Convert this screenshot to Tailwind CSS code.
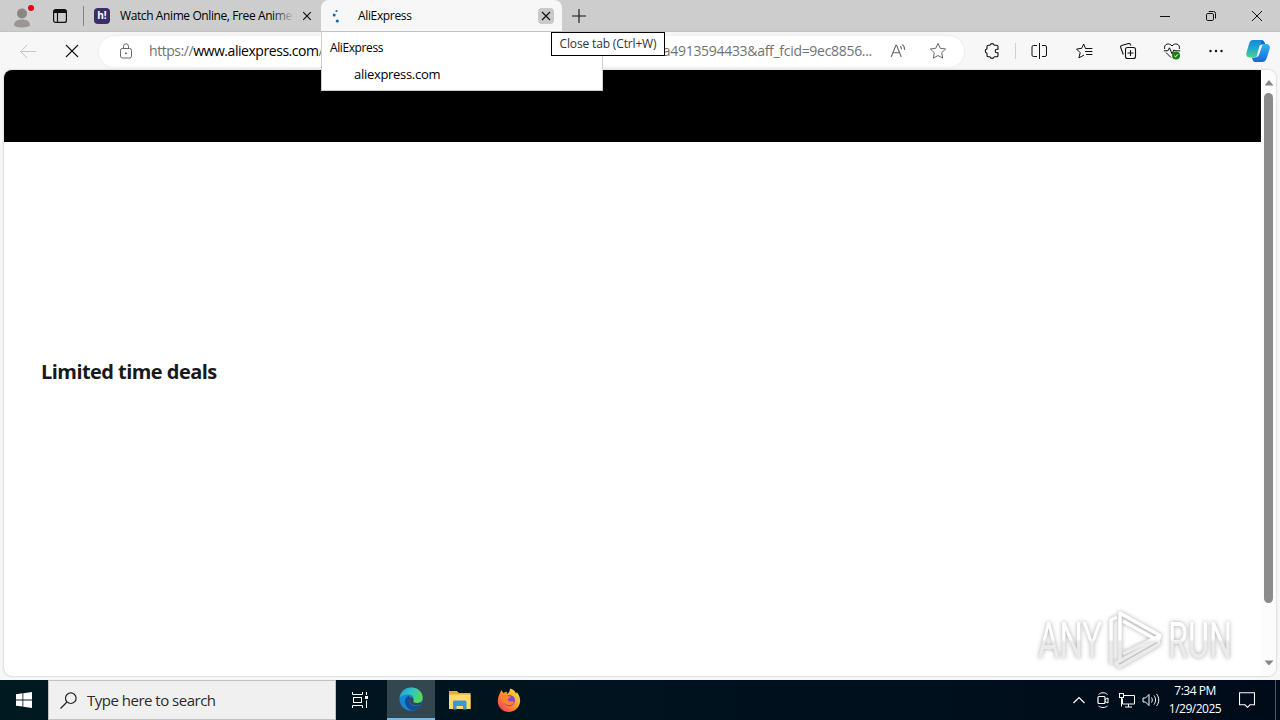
<!DOCTYPE html>
<html lang="en">
  <head>
    <meta charset="UTF-8" />
    <meta name="viewport" content="width=device-width, initial-scale=1.0" />
    <title>AliExpress</title>
    <!-- Tailwind CSS -->
    <script src="https://cdn.jsdelivr.net/npm/@tailwindcss/browser@4"></script>
  </head>
  <body class="relative flex h-[720px] w-[1280px] flex-col overflow-hidden bg-[#f7f7f7] font-['Open_Sans','Noto_Sans',sans-serif] text-black">
    <!-- Tab strip -->
    <header class="flex h-8 shrink-0 items-center border-b border-[#c2c2c2] bg-[#cdcdcd] text-xs">
      <div class="flex w-11 justify-center">
        <svg class="h-7 w-7" viewBox="0 0 28 28">
          <circle cx="14" cy="11.5" r="5" fill="#8b8583" />
          <path d="M6 23.500c0-4 3-6 8-6s8 2 8 6c-2 2.500-14 2.500-16 0z" fill="#9b9694" />
          <circle cx="23" cy="6" r="3" fill="#e30613" />
        </svg>
      </div>
      <div class="flex w-8 justify-center">
        <svg class="h-4 w-4" viewBox="0 0 16 16" fill="none" stroke="#111" stroke-width="1.2">
          <rect x="1.6" y="1.6" width="12.8" height="12.8" rx="2" />
          <path d="M2 3.5h12" stroke-width="3" />
          <path d="M5.5 4v10" />
        </svg>
      </div>
      <div class="ml-[7px] h-5 w-px bg-[#858585]"></div>
      <div class="ml-2.5 flex h-4 w-4 shrink-0 items-center justify-center rounded bg-[#3c2d66] text-[10px] font-bold text-white">h!</div>
      <div class="relative ml-2.5 w-[175px] overflow-hidden whitespace-nowrap tracking-[-0.4px]">
        Watch Anime Online, Free Anime
        <div class="absolute inset-y-0 right-0 w-6 bg-linear-to-r from-transparent to-[#cdcdcd]"></div>
      </div>
      <svg class="ml-[7px] h-2.5 w-2.5 shrink-0" viewBox="0 0 10 10" stroke="#111" stroke-width="1.2"><path d="M1.2 1.2l7.6 7.6M8.8 1.2L1.2 8.8" /></svg>
      <div class="ml-[9px] flex h-full w-[241px] shrink-0 items-center rounded-t-lg bg-[#f7f7f7]">
        <svg class="ml-2 h-4 w-4" viewBox="0 0 16 16" fill="#1666ac">
          <circle cx="7.5" cy="3" r="1.1" />
          <circle cx="5.2" cy="7" r="1.5" />
          <circle cx="8.3" cy="13" r="1.6" />
        </svg>
        <span class="ml-[13px] flex-1 tracking-[-0.35px]">AliExpress</span>
        <div class="mr-2 flex h-4 w-4 items-center justify-center rounded bg-[#c9c9c9]">
          <svg class="h-2.5 w-2.5" viewBox="0 0 10 10" stroke="#111" stroke-width="1.2"><path d="M1 1l8 8M9 1L1 9" /></svg>
        </div>
      </div>
      <svg class="ml-2.5 h-3.5 w-3.5" viewBox="0 0 14 14" stroke="#111" stroke-width="1.1"><path d="M7 0v14M0 7h14" /></svg>
      <div class="ml-auto flex">
        <div class="flex w-[46px] justify-center">
          <svg class="h-3 w-3" viewBox="0 0 12 12" stroke="#111"><path d="M1 6.5h10" /></svg>
        </div>
        <div class="flex w-[46px] justify-center">
          <svg class="h-3 w-3" viewBox="0 0 12 12" fill="none" stroke="#111">
            <rect x="1.5" y="3.5" width="7" height="7" rx="1.3" />
            <path d="M3.7 1.5h4.8a2 2 0 0 1 2 2v5" />
          </svg>
        </div>
        <div class="flex w-[46px] justify-center">
          <svg class="h-3 w-3" viewBox="0 0 12 12" stroke="#111"><path d="M1 1l10 10M11 1L1 11" /></svg>
        </div>
      </div>
    </header>

    <!-- Toolbar -->
    <div class="flex h-[38px] shrink-0 items-center">
      <div class="flex w-14 justify-center">
        <svg class="h-4 w-4" viewBox="0 0 16 16" fill="none" stroke="#c6c6c6"><path d="M16 8.5H.8M7 2L.7 8.5 7 15" /></svg>
      </div>
      <div class="flex w-8 justify-center">
        <svg class="h-3.5 w-3.5" viewBox="0 0 14 14" stroke="#111" stroke-width="1.1"><path d="M1 1l12 12M13 1L1 13" /></svg>
      </div>
      <div class="ml-[11px] flex h-[31px] w-[865px] items-center rounded-full bg-white shadow-[0_0_3px_#e4e4e4]">
        <svg class="ml-[19px] h-4 w-4 shrink-0" viewBox="0 0 16 16" fill="none" stroke="#666">
          <rect x="2.5" y="5.5" width="11" height="9.5" rx="1.8" />
          <path d="M5.5 5.5V3.3a2.5 2.5 0 0 1 5 0v2.2" />
          <circle cx="8" cy="10.3" r=".6" fill="#666" />
        </svg>
        <div class="ml-[15px] flex w-[723px] justify-between whitespace-nowrap text-sm text-[#727272]">
          <span class="tracking-[-0.45px]">https://<span class="text-black">www.aliexpress.com</span>/c</span>
          <span class="tracking-[-0.3px]">a4913594433&amp;aff_fcid=9ec8856...</span>
        </div>
        <svg class="ml-[18px] h-4 w-4" viewBox="0 0 16 16" fill="none" stroke="#666" stroke-width="1.1">
          <path d="M1.2 14L5.9 2.300h.7L11.300 14M2.900 9.800h6.700M10.300 3.200c1 1 1.300 2 1.200 3.200M12.400 1.300c1.800 1.700 2.300 3.500 2.200 5.600" />
        </svg>
        <svg class="ml-[23px] h-[18px] w-[18px]" viewBox="0 0 18 18" fill="none" stroke="#666" stroke-linejoin="round">
          <path d="M9 1.4l2.3 4.9 5.3.7-3.9 3.7 1 5.4L9 13.5l-4.7 2.6 1-5.4L1.4 7l5.3-.7z" />
        </svg>
      </div>
      <div class="ml-[5px] flex flex-1 items-center">
        <div class="flex w-11 justify-center pl-px">
          <svg class="h-[18px] w-[18px]" viewBox="0 0 18 18" fill="none" stroke="#111" stroke-width="1.1" stroke-linejoin="round">
            <path d="M5.300 3.200H7a2.200 2.200 0 0 1 4.200 0h2.500a1.300 1.300 0 0 1 1.300 1.300v2.700h-1a1.800 1.800 0 0 0 0 3.600h1v2.700a1.300 1.300 0 0 1-1.300 1.300h-2.500a2.200 2.200 0 0 1-4.200 0H5.300A1.300 1.300 0 0 1 4 13.500V11.200a2.200 2.200 0 0 1 0-4.300V4.500a1.300 1.300 0 0 1 1.300-1.300z" />
          </svg>
        </div>
        <div class="ml-0.5 h-4 w-px bg-[#d0d0d0]"></div>
        <div class="flex w-[46px] justify-center">
          <svg class="h-4 w-4" viewBox="0 0 16 16" fill="none" stroke="#111">
            <path d="M8.500 0v16M6 2.500H2.500a1.500 1.500 0 0 0-1.500 1.500v8a1.500 1.500 0 0 0 1.500 1.500H6M11 2.500h3a1.500 1.500 0 0 1 1.500 1.500v8a1.500 1.500 0 0 1-1.500 1.500H11" />
          </svg>
        </div>
        <div class="flex w-[43px] justify-center">
          <svg class="h-[18px] w-[18px]" viewBox="0 0 18 18" fill="none" stroke="#111" stroke-linejoin="round" stroke-linecap="round">
            <path d="M10.500 6.500L8.700 2 6.700 6.400 1.500 7l3.700 3.700-1.300 5.200 4.700-2.600M11 6.500h6M10.500 9.500h6.500M11.500 12.500h5.500" />
          </svg>
        </div>
        <div class="flex w-[45px] justify-center">
          <svg class="h-[18px] w-[18px]" viewBox="0 0 18 18" fill="none" stroke="#111" stroke-width="1.100">
            <rect x="6.500" y="5.500" width="10" height="11" rx="2" />
            <path d="M11.500 8v6M8.500 11h6M4.300 12.500L1.700 5.500a1.500 1.500 0 0 1 .9-2l7-2a1.500 1.500 0 0 1 1.900 1.200l.3 1" />
          </svg>
        </div>
        <div class="flex w-[43px] justify-center">
          <svg class="h-[18px] w-[18px]" viewBox="0 0 18 18" fill="none" stroke="#111" stroke-linejoin="round">
            <path d="M1.700 7C.5 1.500 6.500.5 9 4c2.500-3.500 8.500-2.500 7.300 3M3 10.500L8 15.500M.8 8.800h4l1.700-3 2.500 6 2-4 .8 1h5.500" />
            <circle cx="13" cy="13.500" r="4" fill="#188018" stroke="none" />
            <path d="M11.300 13.800l1.200 1.100 2.400-2.600" stroke="#fff" />
          </svg>
        </div>
        <div class="flex w-[45px] justify-center">
          <svg class="h-4 w-4" viewBox="0 0 16 16" fill="#111">
            <circle cx="2.500" cy="8" r="1.200" />
            <circle cx="8" cy="8" r="1.200" />
            <circle cx="13.500" cy="8" r="1.200" />
          </svg>
        </div>
        <svg class="ml-2 h-6 w-6" viewBox="0 0 24 24">
          <defs>
            <linearGradient id="copilotLeft" x1="0" y1="0" x2="0" y2="1">
              <stop offset="0" stop-color="#1686dc" />
              <stop offset="0.500" stop-color="#22a9cf" />
              <stop offset="1" stop-color="#4fd18b" />
            </linearGradient>
            <linearGradient id="copilotRight" x1="0" y1="0" x2="0" y2="1">
              <stop offset="0" stop-color="#36c5f0" />
              <stop offset="1" stop-color="#1568dd" />
            </linearGradient>
          </defs>
          <path d="M14.500 5l1.500-3.500c1.500.2 2.300 1.500 2.800 3.500h1.700c2.500 0 3.800 2 3.200 4.500l-2.600 8.500c-.9 3-2.100 5-5 5H9.500c-2 0-3-1.500-3.500-4.500h3.500z" fill="url(#copilotRight)" />
          <path d="M7 1h8.500c2 0 3 2 3.500 4h-2.500c-1.500 0-2.300 1-2.800 2.500L11 15.500c-.7 2-1.500 3-3.500 3H3.500C1 18.500-.2 16 .5 13.500L3 5c.7-2.500 2-4 4-4z" fill="url(#copilotLeft)" />
          <path d="M13.500 7c.5-1 1.300-1.500 3-1.500l-3.400 10c-.6 1.600-1.500 2.500-3.100 2.800.6-.8.900-1.700 1.200-2.800z" fill="#f7f7f7" />
          <path d="M16 1.300c1.500.8 2.500 2.200 3 3.700h-2.500c-1.500 0-2.300 1-2.800 2.500z" fill="#1264c5" />
        </svg>
      </div>
    </div>

    <!-- Web page -->
    <main class="relative mx-1 flex h-[606px] shrink-0 overflow-hidden rounded-lg bg-white shadow-[0_0_2px_#aaa]">
      <div class="w-[1257px]">
        <div class="h-[72px] bg-black"></div>
        <h2 class="mt-[215px] ml-[37px] text-xl leading-[30px] font-bold tracking-[-0.55px] text-[#191919]">Limited time deals</h2>
      </div>
      <div class="flex w-[15px] flex-col items-center bg-[#fcfcfc]">
        <svg class="mt-2.5 h-1.5 w-2.5" viewBox="0 0 10 6" fill="#858585"><path d="M5 0l4.500 5.500h-9z" /></svg>
        <div class="mt-[7px] h-[510px] w-[9px] rounded-full bg-[#8b8b8b]"></div>
        <svg class="mt-auto mb-2.5 h-1.5 w-2.5" viewBox="0 0 10 6" fill="#858585"><path d="M5 5.500L.5.500h9z" /></svg>
      </div>
      <!-- Watermark -->
      <svg class="absolute top-[534px] left-[1030px] h-[70px] w-[210px] drop-shadow-[0_0_2px_#aaa]" viewBox="0 0 210 70">
        <defs>
          <linearGradient id="markFill" gradientUnits="userSpaceOnUse" x1="0" y1="5" x2="0" y2="65">
            <stop offset=".5" stop-color="#fff" />
            <stop offset=".55" stop-color="#ebebeb" />
          </linearGradient>
        </defs>
        <g fill="url(#markFill)" font-family="Roboto" font-size="50">
          <text x="4" y="54" textLength="64" lengthAdjust="spacingAndGlyphs">ANY</text>
          <text x="134" y="54" textLength="64" lengthAdjust="spacingAndGlyphs">RUN</text>
        </g>
        <g fill="none" stroke="url(#markFill)" stroke-width="3.500" stroke-linejoin="round">
          <path d="M77 60V16l6-3" />
          <path d="M86 56V9l40 22.500-2 5L89 17" />
          <path d="M89 50l34-17 2 7-40 23-3-4 41-23" />
        </g>
      </svg>
    </main>

    <!-- Taskbar -->
    <footer class="mt-auto flex h-10 shrink-0 items-stretch bg-linear-to-r from-[#001820] via-[#00131e] to-[#000b1a] text-white">
      <div class="flex w-12 items-center justify-center">
        <svg class="h-4 w-4" viewBox="0 0 16 16" fill="#fff"><path d="M0 2.200l6.500-.9v6.200H0zM7.300 1.200L16 0v7.500H7.300zM0 8.400h6.500v6.200L0 13.700zM7.300 8.400H16V16l-8.700-1.200z" /></svg>
      </div>
      <div class="flex w-72 items-center border border-[#c2c2c2] bg-[#f0f0f0] text-[#2b2b2b]">
        <svg class="ml-[11px] h-[17px] w-[17px]" viewBox="0 0 17 17" fill="none" stroke="#222" stroke-width="1.200">
          <circle cx="10.800" cy="6.200" r="5.300" />
          <path d="M7 10L.5 16.500" />
        </svg>
        <span class="ml-2.5 text-[15px] tracking-[-0.5px]">Type here to search</span>
      </div>
      <div class="flex w-[51px] items-center pl-4">
        <svg class="h-4 w-4" viewBox="0 0 16 16" fill="none" stroke="#fff">
          <path d="M.5 0v2.500h10V0M.5 16v-2.500h10V16M14.500 0v3M14.500 8.500V16" />
          <rect x="1.500" y="5.500" width="8" height="5" />
          <path d="M13 5.500h3" stroke-width="3" />
        </svg>
      </div>
      <div class="flex w-12 items-center justify-center border-b-2 border-[#76b9ed] bg-[#334750]">
        <svg class="h-6 w-6" viewBox="0 0 24 24">
          <defs>
            <linearGradient id="edgeTop" x1="0" y1="0" x2="1" y2=".5">
              <stop offset="0" stop-color="#1897dc" />
              <stop offset=".5" stop-color="#2fc5c3" />
              <stop offset="1" stop-color="#57d957" />
            </linearGradient>
          </defs>
          <circle cx="12" cy="12" r="11.500" fill="#1688d3" />
          <path d="M.6 11C2 3.500 7 .5 12.500.5 19 .5 24 5.500 23.700 11c-.3 3.500-3 5-6 5-2.700 0-4-.8-3.500-2 1.500-2.500 0-6-3.700-6.500C6 7 2 8.500.6 11z" fill="url(#edgeTop)" />
          <path d="M10 8.500c-3.500 2-5 5-3.500 9 1.300 3.300 4 5.500 7 5.900 3.500-.3 6.700-2.400 8.500-5.400-5 2.500-11.500.5-12-4.500-.1-2 .8-3 .8-3z" fill="#134c9a" />
          <path d="M10.500 10.500c-2 5 3 8.500 8 8 2-.3 3.200-.7 4.200-1.200l1.300-2-5 .8c-3 .2-5.400-.7-4.600-2.500.5-1.500-1.400-3.800-3.900-3.100z" fill="#334750" />
        </svg>
      </div>
      <div class="flex w-[49px] items-center justify-center">
        <svg class="h-5 w-[22px]" viewBox="0 0 22 20">
          <path d="M0 1h8l2 2h11.500v16H0z" fill="#e9ad35" />
          <path d="M0 4.500h21.500V19H0z" fill="#ffd96b" />
          <path d="M4 12a1.500 1.500 0 0 1 1.500-1.500h10.500a1.500 1.500 0 0 1 1.500 1.500v7.500h-3.500V16H7.500v3.500H4z" fill="#3997d7" />
        </svg>
      </div>
      <div class="flex w-[49px] items-center justify-center">
        <svg class="h-6 w-6" viewBox="0 0 24 24">
          <defs>
            <linearGradient id="foxBody" x1="1" y1="0" x2="0" y2="1">
              <stop offset="0" stop-color="#fff14f" />
              <stop offset=".45" stop-color="#ff9d22" />
              <stop offset="1" stop-color="#f42d68" />
            </linearGradient>
          </defs>
          <path d="M3 5l1.500-3 1.700 3 3.500-1.500L10 6c2-1 3-3 3-5.500 3 .7 5 2.500 6 5l.8-1.200c2.700 3 4 7.200 3 11C21.500 20.500 17 24 12 24 5.500 24 .5 19 .8 13 .9 9.500 2 7 3 5z" fill="url(#foxBody)" />
          <circle cx="12.500" cy="12.500" r="5.500" fill="#8448d2" />
          <path d="M3.500 9c2-2.500 5-2.500 7.500-1l3 .6c-.5 1.300-2 1.800-3 2-.3 2 .8 3.300 3 2.900 2-.5 3.700.4 2.500 1.900C13 19 6 17 3.500 9z" fill="#ff8427" />
        </svg>
      </div>
      <!-- System tray -->
      <div class="ml-auto flex items-center">
        <svg class="h-2 w-3" viewBox="0 0 12 8" fill="none" stroke="#fff" stroke-width="1.200"><path d="M.5 7L6 1.500 11.500 7" /></svg>
        <svg class="ml-3 h-4 w-3" viewBox="0 0 12 16" fill="none" stroke="#fff">
          <rect x="1" y="4.500" width="7" height="7" rx="1" stroke-width="1.200" />
          <path d="M8 7.500l3-1.500v5L8 9.500M1.500 2.500c2.500-2.300 6.500-2.300 9 0M1.500 14c2.500 2 6.500 2 9 0" />
        </svg>
        <svg class="ml-[9px] h-4 w-[18px]" viewBox="0 0 18 16" fill="none" stroke="#fff">
          <path d="M6 3.500h10.500v8.500H4.500V6.500M7 15h7M10.500 12v3" />
          <rect x="1.500" y="1.500" width="4" height="4" />
          <path d="M3.500 5.500v9" />
        </svg>
        <svg class="ml-1.5 h-4 w-[18px]" viewBox="0 0 18 16" fill="none" stroke="#fff">
          <path d="M1 6h2.500L7 2.500v11L3.500 10H1zM9.500 5.500c1 1.500 1 3.500 0 5M12 3.500c2 2.700 2 6.300 0 9M14.500 2c3 3.500 3 8.500 0 12" />
        </svg>
        <div class="ml-1.5 flex w-[58px] flex-col items-center text-xs leading-[18px] tracking-[-0.5px] whitespace-nowrap">
          <span>7:34 PM</span>
          <span>1/29/2025</span>
        </div>
        <svg class="ml-[15px] h-4 w-4" viewBox="0 0 16 16" fill="none" stroke="#fff" stroke-width="1.100"><path d="M.5.800h15v12H11l-2.500 2.500L6 12.800H.5z" /></svg>
        <div class="ml-5 h-10 w-px bg-[#4c5661]"></div>
        <div class="w-1"></div>
      </div>
    </footer>

    <!-- Tab hover card -->
    <div class="absolute top-8 left-[321px] h-[59px] w-[282px] border border-t-0 border-[#d0d0d0] bg-white px-2">
      <p class="mt-[7px] text-xs leading-[18px] tracking-[-0.4px]">AliExpress</p>
      <p class="mt-2 ml-6 text-[13px] leading-[18px] tracking-[-0.3px]">aliexpress.com</p>
    </div>
    <!-- Tooltip -->
    <div class="absolute top-8 left-[551px] flex h-6 w-[114px] items-center justify-center border border-black bg-white text-xs tracking-[-0.15px] whitespace-nowrap text-[#333]">Close tab (Ctrl+W)</div>
  </body>
</html>
